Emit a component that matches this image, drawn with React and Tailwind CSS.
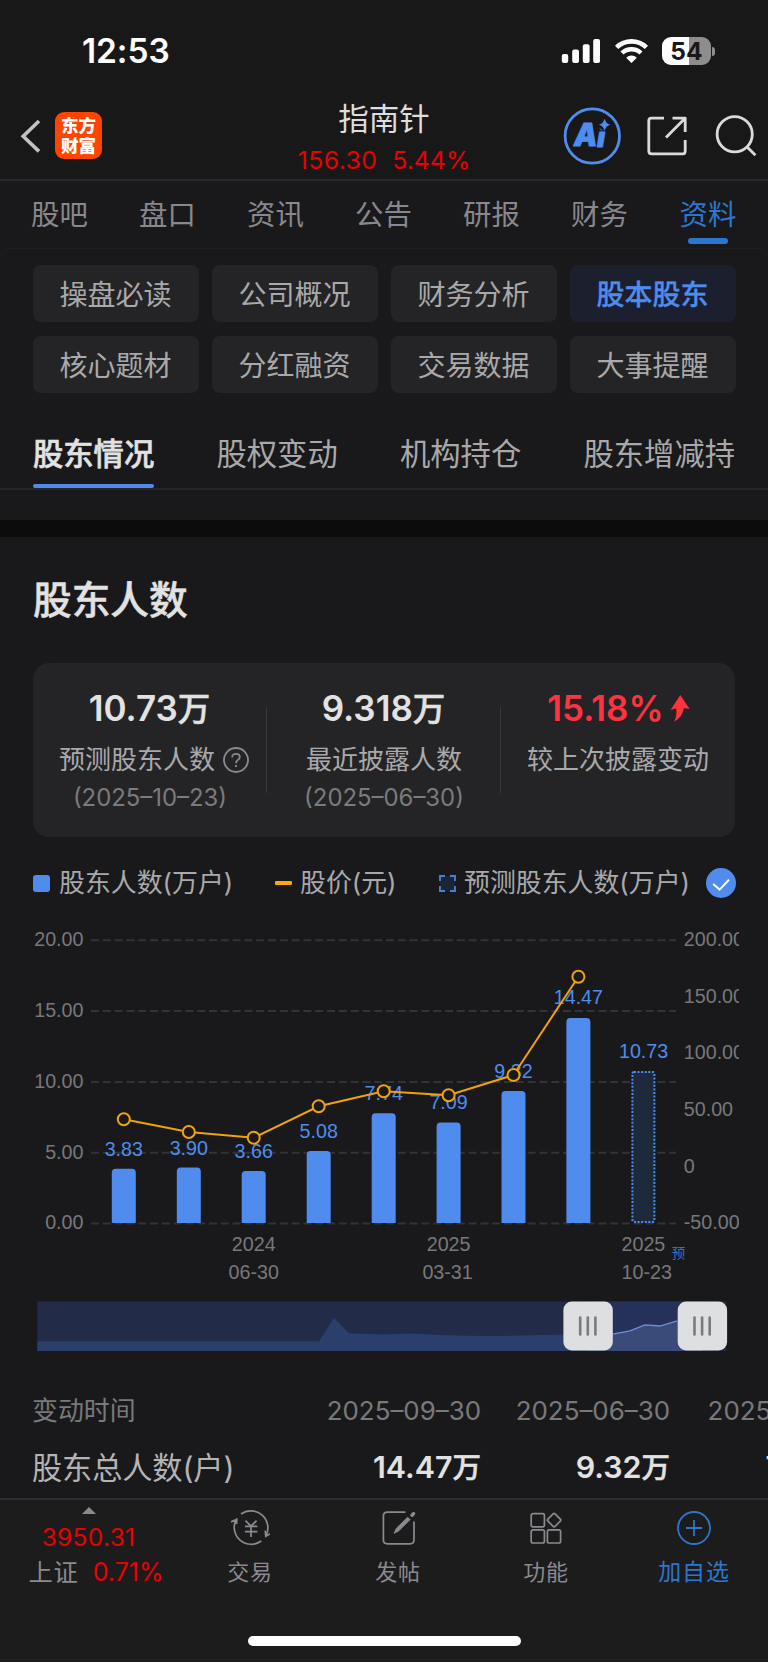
import React from "react";

const TABS = ["股吧", "盘口", "资讯", "公告", "研报", "财务", "资料"];
const CHIPS = ["操盘必读", "公司概况", "财务分析", "股本股东", "核心题材", "分红融资", "交易数据", "大事提醒"];
const SUBTABS = ["股东情况", "股权变动", "机构持仓", "股东增减持"];

const BARS = [
  { x: 123.8, top: 1168.7, label: "3.83", base: 1155.5, line: 1119.3 },
  { x: 188.8, top: 1167.5, label: "3.90", base: 1154.6, line: 1132 },
  { x: 253.7, top: 1171, label: "3.66", base: 1157.8, line: 1137.8 },
  { x: 318.7, top: 1151, label: "5.08", base: 1137.6, line: 1106.3 },
  { x: 383.7, top: 1113.3, label: "7.74", base: 1100, line: 1091.3 },
  { x: 448.6, top: 1122.5, label: "7.09", base: 1109.3, line: 1095.3 },
  { x: 513.5, top: 1091, label: "9.32", base: 1078, line: 1075 },
  { x: 578.4, top: 1018, label: "14.47", base: 1004.2, line: 976.8 },
];
const GRID = [
  [940.2, "20.00"],
  [1011, "15.00"],
  [1082, "10.00"],
  [1152.7, "5.00"],
  [1223.4, "0.00"],
];
const RIGHT = [
  [946.2, "200.00"],
  [1002.7, "150.00"],
  [1059.2, "100.00"],
  [1115.8, "50.00"],
  [1172.6, "0"],
  [1229.2, "-50.00"],
];
const DATES = [
  [253.7, 253.7, "2024", "06-30"],
  [448.6, 447.6, "2025", "03-31"],
  [643.4, 646.8, "2025", "10-23"],
];

function StatusBar() {
  return (
    <div className="flex h-[90px] items-start justify-between pr-[53px] pl-[82px]">
      <div className="mt-[31px] text-[33.5px] leading-[41px] font-semibold tracking-[-0.1px] text-white">12:53</div>
      <div className="mt-[37px] flex items-start">
        <svg className="mt-[2px] h-[25px] w-[40px]" viewBox="0 0 40 25" fill="#fff">
          <rect x="0.8" y="15" width="6.4" height="9" rx="2" />
          <rect x="11.2" y="10.5" width="6.8" height="13.5" rx="2" />
          <rect x="21.8" y="5.3" width="6.8" height="18.7" rx="2" />
          <rect x="32.2" y="0" width="6.8" height="24" rx="2" />
        </svg>
        <svg className="mt-[2px] ml-[14px] h-[25px] w-[33px]" viewBox="0 0 33 25" fill="none" stroke="#fff">
          <path d="M1.6 8.3 A21.6 21.6 0 0 1 31.4 8.3" strokeWidth="4.6" />
          <path d="M7 14 A13.8 13.8 0 0 1 26 14" strokeWidth="4.4" />
          <path d="M11.2 18.8 A7.5 7.5 0 0 1 21.8 18.8 L17.1 23.6 Q16.5 24.2 15.9 23.6 Z" fill="#fff" stroke="none" />
        </svg>
        <div className="ml-[14px] flex items-center">
          <div className="flex h-7 w-[49px] items-center justify-center rounded-[9px] bg-[linear-gradient(90deg,#fff_55%,#8d8d8d_55%)] pt-[1px] text-[24.5px] leading-none font-bold tracking-[0.2px] text-[#181818]">
            54
          </div>
          <div className="ml-[1px] h-[9px] w-[3px] rounded-r-full bg-[#8d8d8d]" />
        </div>
      </div>
    </div>
  );
}

function NavBar() {
  return (
    <div className="flex h-[91px] items-start justify-between border-b-2 border-[#292929] pr-[10px] pl-[20px]">
      <div className="mt-[22px] flex w-[186px] items-center">
        <svg className="h-[36px] w-[22px]" viewBox="0 0 22 36" fill="none" stroke="#c2c2c2" strokeWidth="3.6">
          <path d="M19 3 L3.2 18.2 L19 33.4" />
        </svg>
        <div className="ml-[13px] flex h-[47px] w-[47px] flex-col items-center justify-center rounded-[9px] bg-[#ff4400] text-[17.5px] leading-[19.5px] font-black text-white">
          <span>东方</span>
          <span>财富</span>
        </div>
      </div>
      <div className="flex flex-col items-center">
        <div className="mt-[9px] text-[30.5px] leading-[40px] text-[#dedede]">指南针</div>
        <div className="mt-[6px] flex gap-[15px] text-[24.8px] leading-[30px] tracking-[0.4px] text-[#e90000]">
          <span>156.30</span>
          <span className="tracking-[0px]">5.44%</span>
        </div>
      </div>
      <div className="mt-[16px] flex w-[196px] items-center">
        <svg className="h-[60px] w-[60px] shrink-0" viewBox="0 0 60 60">
          <circle cx="30.3" cy="30" r="27.2" fill="none" stroke="#4e8cf0" strokeWidth="2.8" />
          <text y="40" fontWeight="900" fontStyle="italic" fill="#4e8cf0" stroke="#4e8cf0" strokeWidth="0.8" strokeLinejoin="round">
            <tspan x="12" fontSize="31" textLength="23.5" lengthAdjust="spacingAndGlyphs">A</tspan>
            <tspan x="35" y="41" fontSize="27.5">i</tspan>
          </text>
          <circle cx="43.3" cy="17.9" r="6.8" fill="#181818" />
          <path d="M42.6 14.5 Q43.8 18 46.6 18.8 Q43.8 19.8 42.6 23 Q41.4 19.8 38.6 18.8 Q41.4 18 42.6 14.5 Z" fill="#4e8cf0" stroke="#4e8cf0" strokeWidth="1.2" />
        </svg>
        <svg className="ml-[24px] h-[42px] w-[42px] shrink-0" viewBox="0 0 42 42" fill="none" stroke="#dadada" strokeWidth="2.8" strokeLinejoin="round">
          <path d="M18 3.2 H5.5 Q2.8 3.2 2.8 6 V36 Q2.8 38.8 5.5 38.8 H37 Q39.2 38.8 39.2 36 V25" />
          <path d="M26.5 3.2 H39.2 V17 M38.6 3.8 L20 22.6" />
        </svg>
        <svg className="ml-[23px] h-[46px] w-[46px] shrink-0" viewBox="0 0 46 46" fill="none" stroke="#dadada" strokeWidth="2.8">
          <circle cx="23.7" cy="21.2" r="17.6" />
          <path d="M35.6 33.6 L44.4 42.2" />
        </svg>
      </div>
    </div>
  );
}

function Chart() {
  return (
    <svg className="block h-[366px] w-[768px]" viewBox="0 929 768 366" fontFamily="'Liberation Sans', Arial, sans-serif" fontSize="19.7">
      <defs>
        <clipPath id="axis">
          <rect x="670" y="929" width="69" height="320" />
        </clipPath>
      </defs>
      {GRID.map(([y, t]) => (
        <g key={t}>
          <line x1="91" x2="676" y1={y} y2={y} stroke="#333335" strokeWidth="2" strokeDasharray="8 3.8" />
          <text x="83.5" y={y + 5.8} textAnchor="end" fill="#78787b">{t}</text>
        </g>
      ))}
      <g clipPath="url(#axis)" fill="#78787b">
        {RIGHT.map(([y, t]) => (
          <text key={t} x="683.8" y={y}>{t}</text>
        ))}
      </g>
      {BARS.map((b) => (
        <path
          key={b.x}
          fill="#4f8cee"
          d={`M${b.x - 12} 1223 V${b.top + 4} q0 -4 4 -4 h16 q4 0 4 4 V1223 Z`}
        />
      ))}
      <rect x="632.4" y="1072" width="22" height="150" rx="1.5" fill="#1d2a3c" stroke="#4f8cee" strokeWidth="2" strokeDasharray="2 1.6" />
      <g fill="#4f8cee" textAnchor="middle">
        {BARS.map((b) => (
          <text key={b.x} x={b.x} y={b.base}>{b.label}</text>
        ))}
        <text x="643.6" y="1057.6">10.73</text>
      </g>
      <polyline fill="none" stroke="#f0a30a" strokeWidth="2" points={BARS.map((b) => `${b.x},${b.line}`).join(" ")} />
      {BARS.map((b) => (
        <circle key={b.x} cx={b.x} cy={b.line} r="6" fill="#19191b" stroke="#f0a30a" strokeWidth="2" />
      ))}
      <g fill="#78787b" textAnchor="middle">
        {DATES.map(([x1, x2, a, b]) => (
          <g key={x1}>
            <text x={x1} y="1251">{a}</text>
            <text x={x2} y="1278.6">{b}</text>
          </g>
        ))}
      </g>
      <text x="671.8" y="1258.2" fontSize="13.5" fill="#2d74c8" fontFamily="'Noto Sans CJK SC', sans-serif">预</text>
    </svg>
  );
}

function RangeSlider() {
  return (
    <svg className="mt-[6px] ml-[37px] block h-[50px] w-[691px]" viewBox="37 1301 691 50">
      <rect x="37.3" y="1301.4" width="689" height="49.6" fill="#222b47" />
      <rect x="588" y="1301.4" width="114" height="49.6" fill="#263159" />
      <path
        fill="#2a3f6b"
        d="M37.3 1341.2 H319 L334 1318 L349 1333.2 L384 1334.5 L410 1333.6 L440 1335 L470 1335.7 L500 1336 L540 1335 L565 1334.6 L588 1334 V1351 H37.3 Z"
      />
      <path fill="#3a4b79" d="M588 1334.5 L614 1333.8 L630 1330.8 L645 1324.8 L660 1326 L677 1320.8 L702 1314 V1351 H588 Z" />
      <path fill="none" stroke="#6f8fd8" strokeWidth="1.3" d="M588 1334.5 L614 1333.8 L630 1330.8 L645 1324.8 L660 1326 L677 1320.8" />
      {[563, 677.3].map((x) => (
        <g key={x}>
          <rect x={x + 0.4} y="1301.6" width="49.4" height="49" rx="8.5" fill="#dedfe1" />
          {[17.2, 24.8, 32.4].map((d) => (
            <line key={d} x1={x + d} x2={x + d} y1="1317.5" y2="1334.5" stroke="#7b7b7d" strokeWidth="2.6" strokeLinecap="round" />
          ))}
        </g>
      ))}
    </svg>
  );
}

function Wan({ className }) {
  return <span className={"font-medium [-webkit-text-stroke:0.5px] " + className}>万</span>;
}

function Summary() {
  return (
    <div className="mx-[33px] grid h-[174px] grid-cols-3 rounded-2xl bg-[#242426] text-center">
      <div className="relative flex flex-col items-center">
        <div className="mt-[24px] mr-[1px] h-[42px] text-[35px] leading-[42px] font-semibold text-[#e2e2e2]">
          10.73<Wan className="text-[32.5px]" />
        </div>
        <div className="mt-[13px] flex items-center pl-[8px] text-[26px] leading-[36px] text-[#a9a9ab]">
          预测股东人数
          <svg className="ml-[8px] h-[26px] w-[26px]" viewBox="0 0 26 26" fill="none" stroke="#8b8b8d" strokeWidth="1.8">
            <circle cx="13" cy="13" r="12" />
            <path d="M9.2 10.4 Q9.2 6.8 13 6.8 Q16.8 6.8 16.8 10.1 Q16.8 11.8 14.8 13 Q13 14.2 13 16.3 M13 18 V20" />
          </svg>
        </div>
        <div className="mt-[1px] text-[23.9px] leading-[37px] text-[#7b7b7d]">(2025–10–23)</div>
        <div className="absolute top-[44px] right-0 h-[86px] w-px bg-[#38383a]" />
      </div>
      <div className="relative flex flex-col items-center">
        <div className="mt-[24px] mr-[1px] h-[42px] text-[35px] leading-[42px] font-semibold text-[#e2e2e2]">
          9.318<Wan className="text-[32.5px]" />
        </div>
        <div className="mt-[13px] text-[26px] leading-[36px] text-[#a9a9ab]">最近披露人数</div>
        <div className="mt-[1px] text-[23.9px] leading-[37px] text-[#7b7b7d]">(2025–06–30)</div>
        <div className="absolute top-[44px] right-0 h-[86px] w-px bg-[#38383a]" />
      </div>
      <div className="flex flex-col items-center">
        <div className="mt-[24px] ml-[1px] flex h-[42px] items-center text-[35px] leading-[42px] font-semibold text-[#ff333f]">
          15.18%
          <svg className="ml-[6px] h-[27px] w-[20px]" viewBox="0 0 20 27" fill="#ff333f">
            <path d="M10.3 0 L19.6 14 L13.8 13 Q13 21.5 4.2 26.8 Q7.2 20 6.2 13.2 L0.6 15 Z" />
          </svg>
        </div>
        <div className="mt-[13px] text-[26px] leading-[36px] text-[#a9a9ab]">较上次披露变动</div>
      </div>
    </div>
  );
}

function Legend() {
  return (
    <div className="flex h-[92px] items-center pr-[32px] pl-[33px] text-[25.9px] text-[#a9a9ab]">
      <div className="h-[17px] w-[17px] rounded-[3px] bg-[#4f8cee]" />
      <div className="ml-[9px] w-[216px] pb-[1px] leading-[39px]">股东人数(万户)</div>
      <div className="h-[4px] w-[17px] rounded-[1px] bg-[#f9a80a]" />
      <div className="ml-[8px] w-[139px] pb-[1px] leading-[39px]">股价(元)</div>
      <svg className="h-[17px] w-[17px]" viewBox="0 0 17 17">
        <rect x="1" y="1" width="15" height="15" fill="#1d2532" />
        <path d="M1 6 V1 H6 M11 1 H16 V6 M16 11 V16 H11 M6 16 H1 V11" fill="none" stroke="#4680da" strokeWidth="1.9" />
      </svg>
      <div className="ml-[8px] grow pb-[1px] leading-[39px] whitespace-nowrap">预测股东人数(万户)</div>
      <svg className="h-[30px] w-[30px]" viewBox="0 0 30 30">
        <circle cx="15" cy="15" r="15" fill="#4f8cee" />
        <path d="M7.2 16 L13.6 21.6 L23 11.8" fill="none" stroke="#fff" strokeWidth="2" />
      </svg>
    </div>
  );
}

function Table() {
  return (
    <div className="h-[147px] overflow-hidden pt-[40px] pl-[32px] whitespace-nowrap">
      <div className="flex h-[40px] w-[900px] items-center text-[25.9px] text-[#79797b]">
        <div className="w-[259px]">变动时间</div>
        <div className="w-[190px] text-right">2025–09–30</div>
        <div className="w-[189px] text-right">2025–06–30</div>
        <div className="w-[186px] text-right">2025–03–31</div>
      </div>
      <div className="mt-[17px] flex h-[40px] w-[900px] items-center text-[30.4px] font-semibold text-[#e2e2e2]">
        <div className="w-[259px] pt-[1px] text-[30.2px] font-normal tracking-[-0.1px] text-[#b4b4b6]">股东总人数(户)</div>
        <div className="w-[190px] text-right">14.47<Wan className="text-[28.5px]" /></div>
        <div className="w-[189px] text-right">9.32<Wan className="text-[28.5px]" /></div>
        <div className="w-[186px] text-right">7.09<Wan className="text-[28.5px]" /></div>
      </div>
    </div>
  );
}

function BottomBar() {
  const item = "flex w-[148px] flex-col items-center text-[22px] leading-[30px] tracking-[0.8px] text-[#8a8a90]";
  return (
    <div className="flex h-[164px] flex-col border-t-2 border-[#2d2d2d] bg-[#1c1c1c]">
      <div className="flex h-[136px]">
        <div className="flex w-[176px] flex-col items-center">
          <svg className="mt-[7px] ml-[1px] h-[7px] w-[14px]" viewBox="0 0 14 7" fill="#8a8a90"><path d="M7 0 L14 7 H0 Z" /></svg>
          <div className="mt-[8px] ml-[1px] text-[24.5px] leading-[30px] tracking-[0.3px] text-[#e90000]">3950.31</div>
          <div className="mt-[5px] flex gap-[14px] pl-[16px] text-[24.3px] leading-[30px] text-[#8a8a90]">
            <span className="tracking-[0.8px]">上证</span>
            <span className="text-[25px] text-[#e90000]">0.71%</span>
          </div>
        </div>
        <div className={item}>
          <svg className="mt-[9px] h-[38px] w-[40px]" viewBox="0 0 40 38" fill="none" stroke="#8a8a90" strokeWidth="1.7">
            <path d="M11 5 A17 17 0 0 1 35.8 27 M35.2 21.6 L35.8 27.4 L39.8 24.8" />
            <path d="M31.3 32 A17 17 0 0 1 6 10.8 M1 12.9 L6.8 10.4 L6.6 15" />
            <path d="M15.4 11.6 L21 17.2 L26.6 11.6 M21 17.2 V28 M15 17.4 H27.4 M15 22.6 H27.4" />
          </svg>
          <div className="mt-[10px]">交易</div>
        </div>
        <div className={item}>
          <svg className="mt-[9px] h-[38px] w-[38px]" viewBox="0 0 38 38" fill="none" stroke="#8a8a90" strokeWidth="1.7">
            <path d="M26.5 3.2 H8.5 Q4.4 3.2 4.4 7 V31 Q4.4 34.8 8.5 34.8 H31 Q35 34.8 35 31 V12.5" />
            <path d="M15.2 24.2 L17.4 19.4 L28.6 8.2 L31 10.6 L19.8 21.8 Z" fill="#8a8a90" strokeWidth="1" />
            <path d="M33 6.2 L34.6 4.6" strokeWidth="3.4" strokeLinecap="round" />
          </svg>
          <div className="mt-[10px]">发帖</div>
        </div>
        <div className={item}>
          <svg className="mt-[9px] h-[38px] w-[38px]" viewBox="0 0 38 38" fill="none" stroke="#8a8a90" strokeWidth="1.7">
            <rect x="4.2" y="4.6" width="13.2" height="13.2" rx="1.8" />
            <rect x="4.2" y="20.8" width="13.2" height="13.2" rx="1.8" />
            <rect x="20.4" y="20.8" width="13.2" height="13.2" rx="1.8" />
            <rect x="22" y="6" width="10.2" height="10.2" rx="1.4" transform="rotate(45 27.1 11.1)" />
          </svg>
          <div className="mt-[10px]">功能</div>
        </div>
        <div className="flex w-[148px] flex-col items-center text-[23px] leading-[30px] tracking-[0.8px] text-[#2d76cf]">
          <svg className="mt-[9px] h-[38px] w-[38px]" viewBox="0 0 38 38" fill="none" stroke="#2d76cf" strokeWidth="1.8">
            <circle cx="19" cy="19" r="16" />
            <path d="M19 11 V27 M11 19 H27" />
          </svg>
          <div className="mt-[10px]">加自选</div>
        </div>
      </div>
      <div className="ml-[248px] h-[10px] w-[273px] rounded-full bg-white" />
    </div>
  );
}

export default function App() {
  return (
    <div className="h-[1663px] w-[768px] overflow-hidden bg-white font-['Inter','Noto_Sans_CJK_SC',sans-serif]">
      <div className="h-[1662px] bg-[#19191b]">
        <div className="bg-[#181818]">
          <StatusBar />
          <NavBar />
        </div>
        <div className="mx-[6px] grid h-[68px] grid-cols-7 border-b border-[#212123] text-[28.4px] text-[#88888e]">
          {TABS.map((t) => (
            <div key={t} className="flex flex-col items-center">
              <div className={t === "资料" ? "mt-[14px] leading-[40px] text-[#2d76cf]" : "mt-[14px] mr-[1px] leading-[40px]"}>{t}</div>
              {t === "资料" && <div className="mt-[3px] h-[6px] w-[40px] rounded-[3px] bg-[#2d76cf]" />}
            </div>
          ))}
        </div>
        <div className="grid grid-cols-4 gap-x-[13px] gap-y-[14px] px-[32.5px] pt-4 text-[28px] text-[#a9a9ab]">
          {CHIPS.map((t) => (
            <div
              key={t}
              className={
                "flex h-[57px] items-center justify-center rounded-lg pt-[3px] " +
                (t === "股本股东" ? "bg-[#1c202e] font-medium text-[#4f8cee] [-webkit-text-stroke:0.3px]" : "bg-[#242426]")
              }
            >
              {t}
            </div>
          ))}
        </div>
        <div className="flex h-[97px] justify-between border-b-2 border-[#252527] px-[33px] text-[30.3px] text-[#a9a9ab]">
          {SUBTABS.map((t) => (
            <div key={t} className={"flex flex-col justify-between " + (t === "股东情况" ? "font-medium text-[#e2e2e2] [-webkit-text-stroke:0.6px]" : "")}>
              <div className="mt-[41px] leading-[40px]">{t}</div>
              {t === "股东情况" && <div className="h-[4px] rounded-full bg-[#4f8cee]" />}
            </div>
          ))}
        </div>
        <div className="mt-[30px] h-[17px] bg-[#0c0c0c]" />
        <h2 className="flex h-[126px] items-center pl-[33px] text-[38.7px] font-medium text-[#e2e2e2] [-webkit-text-stroke:0.5px]">股东人数</h2>
        <Summary />
        <Legend />
        <Chart />
        <RangeSlider />
        <Table />
        <BottomBar />
      </div>
    </div>
  );
}
